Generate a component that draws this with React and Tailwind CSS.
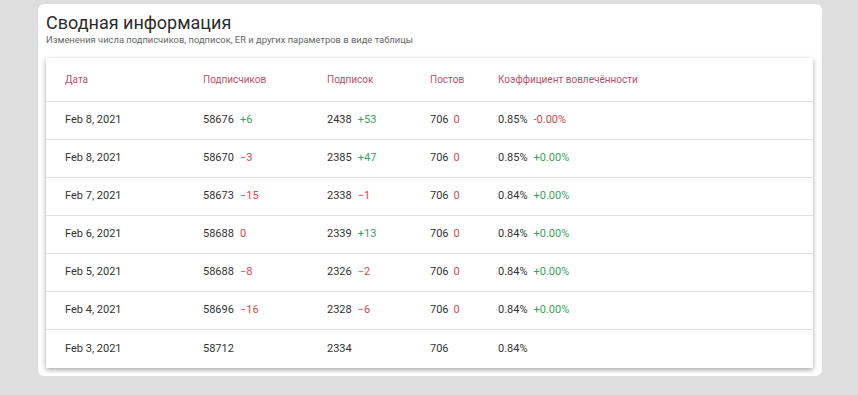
import React from 'react'

const rows = [
  { date: 'Feb 8, 2021', subs: '58676', subsD: '+6', fol: '2438', folD: '+53', posts: '706', postsD: '0', er: '0.85%', erD: '-0.00%', erNeg: true },
  { date: 'Feb 8, 2021', subs: '58670', subsD: '−3', fol: '2385', folD: '+47', posts: '706', postsD: '0', er: '0.85%', erD: '+0.00%' },
  { date: 'Feb 7, 2021', subs: '58673', subsD: '−15', fol: '2338', folD: '−1', posts: '706', postsD: '0', er: '0.84%', erD: '+0.00%' },
  { date: 'Feb 6, 2021', subs: '58688', subsD: '0', fol: '2339', folD: '+13', posts: '706', postsD: '0', er: '0.84%', erD: '+0.00%' },
  { date: 'Feb 5, 2021', subs: '58688', subsD: '−8', fol: '2326', folD: '−2', posts: '706', postsD: '0', er: '0.84%', erD: '+0.00%' },
  { date: 'Feb 4, 2021', subs: '58696', subsD: '−16', fol: '2328', folD: '−6', posts: '706', postsD: '0', er: '0.84%', erD: '+0.00%' },
  { date: 'Feb 3, 2021', subs: '58712', fol: '2334', posts: '706', er: '0.84%' },
]

const Delta = ({ value, neg }) => {
  if (!value) return null
  const isPos = value.startsWith('+') && !neg
  return <span className={`ml-[6px] ${isPos ? 'text-[#3c9f5e]' : 'text-[#d0494f]'}`}>{value}</span>
}

const App = () => {
  return (
    <div className="w-[858px] h-[395px] bg-[#dedede] pt-[4px] pl-[38px]" style={{ fontFamily: 'Roboto, "Noto Sans", sans-serif' }}>
      <div className="w-[784px] h-[372px] bg-white rounded-md pl-[8px] pr-[9px] pt-[8px]">
        <h1 className="text-[18px] leading-[22px] text-[#2b2b2b]">Сводная информация</h1>
        <p className="text-[9.4px] leading-[12px] text-[#666]">Изменения числа подписчиков, подписок, ER и других параметров в виде таблицы</p>
        <div className="mt-[12px] bg-white shadow-[0_2px_5px_rgba(0,0,0,0.35)]">
          <div className="flex items-center h-[44px] pl-[19px] text-[10px] text-[#b5536a] border-b border-[#e0e0e0]">
            <div className="w-[138px]">Дата</div>
            <div className="w-[124px]">Подписчиков</div>
            <div className="w-[103px]">Подписок</div>
            <div className="w-[68px]">Постов</div>
            <div>Коэффициент вовлечённости</div>
          </div>
          {rows.map((r, i) => (
            <div key={i} className={`flex items-center h-[38px] pl-[19px] text-[11px] text-[#333] ${i < rows.length - 1 ? 'border-b border-[#e0e0e0]' : ''}`}>
              <div className="w-[138px]">{r.date}</div>
              <div className="w-[124px]">{r.subs}<Delta value={r.subsD} /></div>
              <div className="w-[103px]">{r.fol}<Delta value={r.folD} /></div>
              <div className="w-[68px]">{r.posts}{r.postsD && <span className="ml-[5px] text-[#d0494f]">{r.postsD}</span>}</div>
              <div>{r.er}<Delta value={r.erD} neg={r.erNeg} /></div>
            </div>
          ))}
        </div>
      </div>
    </div>
  )
}

export default App
